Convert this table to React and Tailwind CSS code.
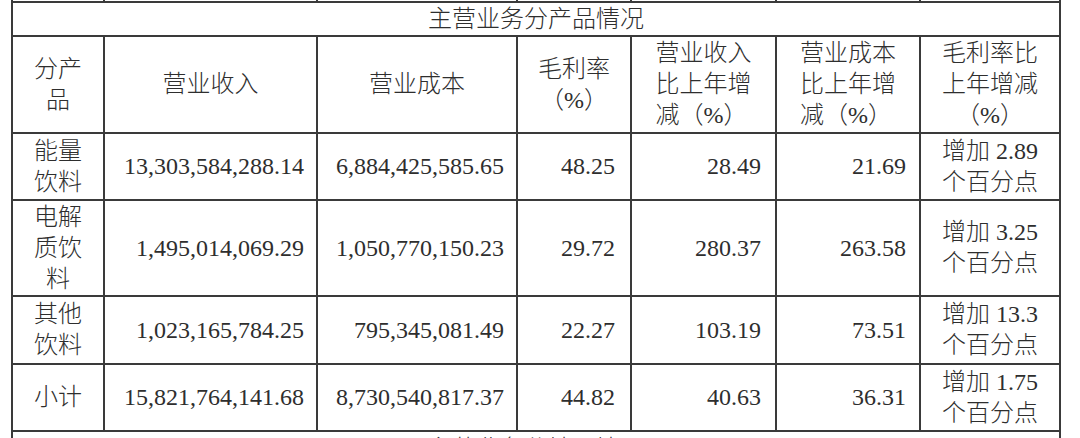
import React from 'react';

const font = { fontFamily: '"Liberation Serif", "Noto Sans CJK SC", serif' };

const rows = [
    { name: ['能量', '饮料'], revenue: '13,303,584,288.14', cost: '6,884,425,585.65', margin: '48.25', revChg: '28.49', costChg: '21.69', marginChg: '2.89' },
    { name: ['电解', '质饮', '料'], revenue: '1,495,014,069.29', cost: '1,050,770,150.23', margin: '29.72', revChg: '280.37', costChg: '263.58', marginChg: '3.25' },
    { name: ['其他', '饮料'], revenue: '1,023,165,784.25', cost: '795,345,081.49', margin: '22.27', revChg: '103.19', costChg: '73.51', marginChg: '13.3' },
    { name: ['小计'], revenue: '15,821,764,141.68', cost: '8,730,540,817.37', margin: '44.82', revChg: '40.63', costChg: '36.31', marginChg: '1.75' },
];

const Lines = ({ lines, align = 'text-center' }) => (
    <div className={`inline-block ${align}`}>
        {lines.map((l, i) => (
            <div key={i}>{l}</div>
        ))}
    </div>
);

const Center = ({ children }) => (
    <div className="bg-white flex items-center justify-center">{children}</div>
);

const Num = ({ children, pr = 'pr-[12px]' }) => (
    <div className={`bg-white flex items-center justify-end ${pr}`}>{children}</div>
);

const App = () => {
    return (
        <div className="h-[438px] w-[1080px] overflow-hidden bg-white" style={font}>
            <div className="ml-[11px] w-[1050px] bg-[#3a3a3a] px-[2px] grid grid-cols-[90px_211px_198px_112px_143px_142px_138px] grid-rows-[1px_32px_95px_65px_94px_66px_65px_30px] gap-[2px] text-[24px] leading-[31px] font-light text-[#2e2e2e]">
                {/* tail of the table above */}
                <div className="bg-white" />
                <div className="bg-white" />
                <div className="bg-white" />
                <div className="bg-white" />
                <div className="bg-white" />
                <div className="bg-white" />
                <div className="bg-white" />

                <div className="col-span-7 bg-white flex items-center justify-center">主营业务分产品情况</div>

                {/* header */}
                <Center><Lines lines={['分产', '品']} /></Center>
                <Center>营业收入</Center>
                <Center>营业成本</Center>
                <Center><Lines lines={['毛利率', '（%）']} /></Center>
                <Center><Lines lines={['营业收入', '比上年增', '减（%）']} align="text-left" /></Center>
                <Center><Lines lines={['营业成本', '比上年增', '减（%）']} align="text-left" /></Center>
                <Center><Lines lines={['毛利率比', '上年增减', '（%）']} /></Center>

                {rows.map((r) => (
                    <React.Fragment key={r.revenue}>
                        <Center><Lines lines={r.name} /></Center>
                        <Num>{r.revenue}</Num>
                        <Num>{r.cost}</Num>
                        <Num pr="pr-[15px]">{r.margin}</Num>
                        <Num pr="pr-[14px]">{r.revChg}</Num>
                        <Num pr="pr-[13px]">{r.costChg}</Num>
                        <Center><Lines lines={[`增加 ${r.marginChg}`, '个百分点']} /></Center>
                    </React.Fragment>
                ))}

                {/* head of the next table, cut by the picture edge */}
                <div className="col-span-7 bg-white flex justify-center pt-[2px]">主营业务分地区情况</div>
            </div>
        </div>
    );
};

export default App;
